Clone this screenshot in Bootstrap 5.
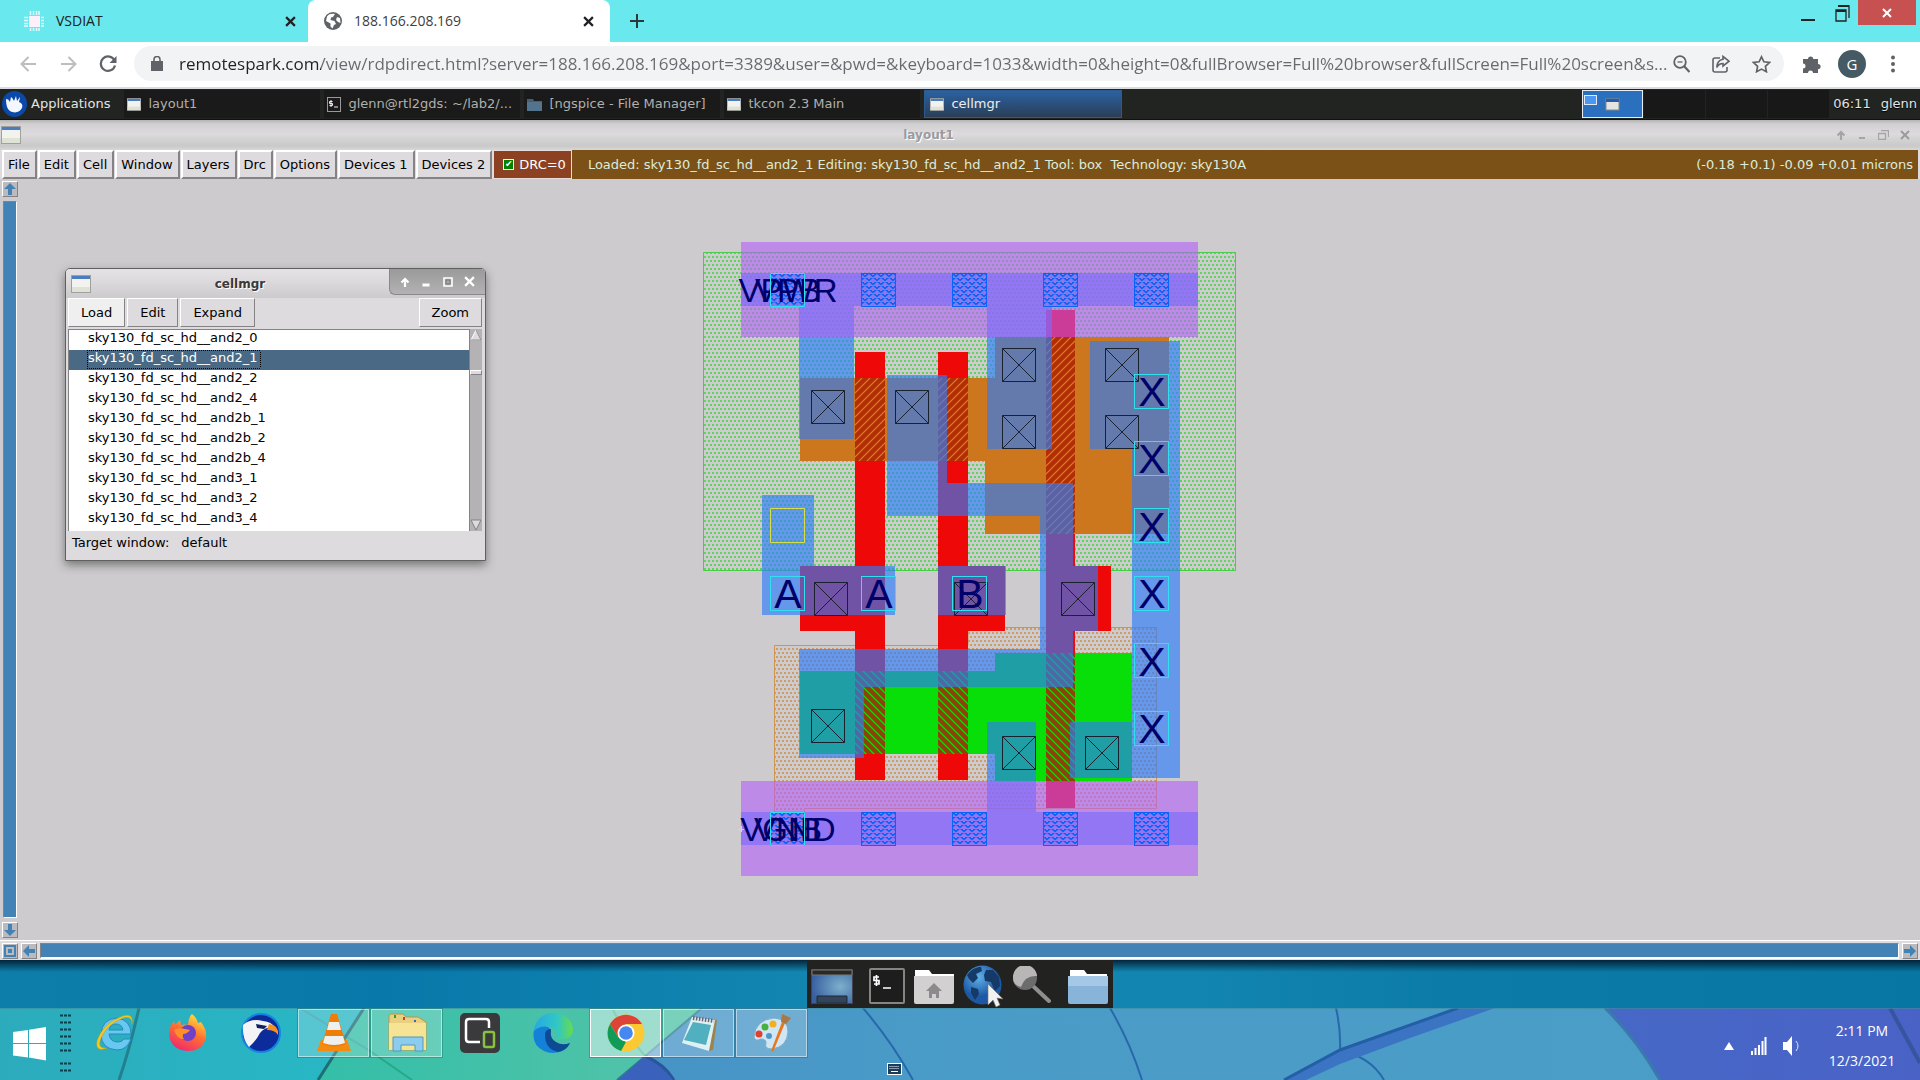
<!DOCTYPE html>
<html lang="en">
<head>
<meta charset="utf-8">
<title>188.166.208.169</title>
<meta name="viewport" content="width=device-width, initial-scale=1">
<link href="https://cdn.jsdelivr.net/npm/bootstrap@5.3.0/dist/css/bootstrap.min.css" rel="stylesheet">
<style>
body{font-family:"Open Sans","Noto Sans",sans-serif;font-size:14px;line-height:20px;overflow:hidden;color:#202124}
button,input,select{font:inherit;color:inherit}
svg{display:block;flex-shrink:0}
.bare{border:0;background:none;padding:0;display:flex;align-items:center;justify-content:center}
/* browser */
.tabstrip{height:42px;background:#69e8ed}
.tab-idle{width:308px;padding:0 12px 0 24px}
.tab-live{width:302px;padding:0 16px 0 16px;gap:12px;background:#fff;border-radius:8px 8px 0 0;color:#3c4043}
.tab-live .bare{color:#202124}
.win-ctl{height:25px;align-self:flex-start}
.win-close{width:58px;height:25px;background:#c75050}
.toolbar-row{height:47px;border-bottom:2px solid #dadce0;background:#fff;padding:0 24px 2px 18px}
.nav-ic{width:20px;margin-right:20px}
.omni{height:35px;border-radius:18px;background:#f1f3f4;padding:0 13px 0 17px;margin-right:18px;min-width:0}
.omni-tools{gap:22px}
.url-box{border:0;outline:0;min-width:0;font-size:17px;line-height:28px;padding:0;color:#5f6368;background:linear-gradient(90deg,#202124 0 142px,#666a6e 142px);-webkit-background-clip:text;background-clip:text;-webkit-text-fill-color:transparent}
.avatar-dot{width:28px;height:28px;border-radius:50%;background:#455a64;color:#fff;font-size:15px;margin-right:20px}
/* remote desktop */
.xpanel,.wm-title,.magic,.cellwin{font-family:"DejaVu Sans",sans-serif;font-size:13px;line-height:20px}
.xpanel{height:31px;background:#222421;color:#e4e4e4;border-bottom:1px solid #111;text-shadow:0 1px 1px #000}
.app-menu{padding-left:2px;margin-right:14px}
.task-b{width:196px;height:28px;margin-right:4px;padding:0 3px;gap:7px;background:#191a19;color:#b0b0ae;justify-content:flex-start;text-align:left}
.task-b.on{width:198px;padding:0 5px;background:linear-gradient(#2b62a0,#2a3e58);border:1px solid #2a5a90;color:#eee}
.pager-c{width:61px;height:28px;margin-left:1px;background:#171817}
.pager-c.on{background:#2a70be;border:1px solid #e8eef6}
.xpanel-end{gap:10px;padding:0 3px 0 4px}
.wm-title{height:30px;background:linear-gradient(#b4b4b4,#d2d0d2 4px,#dcdadc 14px,#c9c9c9 26px,#d8d8d8);color:#9c9a9c;font-size:12px;font-weight:700;text-shadow:1px 1px 0 #fff;padding:0 10px 0 1px}
.wm-ctl{gap:11px}
.magic{background:#cecbce;min-height:0}
.menu-b{height:29px;border:2px solid;border-color:#fff #848284 #848284 #fff;background:#dedbde;color:#000;padding:0 5px 0 4px;margin-right:1px;white-space:nowrap}
.menu-row{height:29px;padding:0 2px;background:#dedbde}
.drc-b{height:29px;background:#8c4222;color:#fff;border:1px solid #e6dcd8;padding:0 5px 0 9px;gap:5px;white-space:nowrap}
.drc-b input{appearance:none;width:11px;height:11px;margin:0;background:#008200;border:1px solid #dfd;display:grid;place-content:center}
.drc-b input:checked::before{content:"✔";font-size:9px;line-height:9px;color:#fff}
.status-b{background:#7b5118;color:#dcecdc;padding:0 5px 0 16px;white-space:pre}
.vbar{width:20px;padding:2px}
.sq-b{width:16px;height:16px;background:#bdbabd;border:solid 1px;border-color:#fff #848284 #848284 #fff}
.track-v{width:14px;background:#4282b5;border:solid 1px;border-color:#848284 #fff #fff #848284}
.track-h{height:16px;background:#4282b5;border:solid;border-width:1px 1px 2px 1px;border-color:#848284 #fff #fff #848284}
.hbar{height:20px;padding:1px 2px;border-top:1px solid #fff;background:#dedbde;gap:3px}
.layout-area{position:relative;min-height:0;overflow:hidden}
.layout-view{width:0}
.layout-area text{font-family:"Liberation Sans",Arial,sans-serif;fill:#00006b;text-anchor:middle}
/* cell manager */
.cellwin{position:absolute;left:65px;top:89px;width:421px;background:#dedbde;border:1px solid #606060;border-radius:5px 5px 0 0;box-shadow:0 4px 10px rgba(40,50,40,.55);color:#000;padding:0 3px 0 2px}
.cellwin-t{height:29px;margin:0 -3px 0 -2px;border-radius:4px 4px 0 0;background:linear-gradient(#e4e2e4,#dcdadc 12px,#cccacc);padding-left:5px}
.cellwin-t b{font-size:12px;color:#3a3a3a;text-shadow:1px 1px 0 #fff}
.cellwin-c{width:96px;height:26px;align-self:flex-start;background:linear-gradient(#9a9a9a,#b4b2b4);border:solid #888;border-width:0 0 1px 1px;border-radius:0 4px 0 6px;justify-content:space-around;padding:0 4px}
.cell-tools{gap:2px;padding-bottom:2px}
.cell-foot{gap:12px;padding:2px 4px 7px}
.cell-b{height:29px;border:1px solid;border-color:#fff #848284 #848284 #fff;background:#dedbde;padding:0 12px}
.cell-b.hot{background:#efefef}
.cell-list{appearance:none;border:solid #848284;border-width:1px 0 0 1px;border-radius:0;padding:0;height:202px;overflow:hidden;background:#fff;outline:0}
.cell-list option{height:20px;min-height:20px;line-height:20px;padding:0 0 0 19px;color:#000}
.cell-list option:checked{-webkit-text-fill-color:#fff;color:#fff;background:
 repeating-linear-gradient(90deg,#000 0 1px,#4a6984 1px 2px) 18px 0/174px 1px no-repeat,
 repeating-linear-gradient(90deg,#000 0 1px,#4a6984 1px 2px) 18px 18px/174px 1px no-repeat,
 repeating-linear-gradient(#000 0 1px,#4a6984 1px 2px) 18px 0/1px 19px no-repeat,
 repeating-linear-gradient(#000 0 1px,#4a6984 1px 2px) 191px 0/1px 19px no-repeat,#4a6984}
.cell-sb{width:13px;background:#b5b2b5;border-left:1px solid #848284}
.sb-thumb{height:5px;background:#dedbde;border:solid 1px;border-color:#fff #848284 #848284 #fff;margin-top:29px}
/* host */
.desk{height:48px;background:linear-gradient(rgba(0,20,40,.85),rgba(0,40,60,0) 12px),linear-gradient(90deg,#0d7ea8,#0878aa 20%,#1286b0 42%,#1285b0 62%,#0c7ba8 75%,#0776a2)}
.dock{width:306px;background:#222320;padding:4px 4px 0}
.dock .bare{margin-right:8px}
.dock .wide{margin-right:16px}
.dock .bare:last-child{margin-right:0}
.winbar{height:72px;position:relative}
.winbar-bg{position:absolute;left:0;top:0;width:100%;height:100%}
.winbar-row{position:relative;height:72px}
.start-b{padding-left:13px}
.grip-b{margin:0 6px 0 12px}
.wb{width:71px;height:48px;margin-right:2px;margin-top:1px}
.wb.run{background:rgba(255,255,255,.22);border:1px solid rgba(255,255,255,.5);outline:1px solid rgba(20,80,90,.3)}
.wb.front{background:rgba(255,255,255,.45);border-color:#fff}
.tray{color:#fff;padding:3px 20px 0 0}
.clock-b{line-height:30px;width:76px}
.kbd-b{position:absolute;left:887px;top:55px}
</style>
<script src="https://cdn.jsdelivr.net/npm/bootstrap@5.3.0/dist/js/bootstrap.bundle.min.js"></script>
</head>
<body class="vh-100 d-flex flex-column">
<svg width="0" height="0" class="position-absolute" aria-hidden="true"><defs>
 <symbol id="winic" viewBox="0 0 20 18"><rect width="20" height="18" fill="#a0a09c"/><rect x="1" y="1" width="18" height="16" fill="#f2f3ee"/><rect x="1" y="1" width="18" height="3" fill="#4c7cc0"/><rect x="1" y="12" width="18" height="5" fill="#dfe2d6"/></symbol>
 <symbol id="xx" viewBox="0 0 10 10"><path d="M1 1l8 8M9 1l-8 8" stroke="currentColor" stroke-width="2" fill="none"/></symbol>
</defs></svg>

<header class="tabstrip d-flex align-items-stretch">
 <div class="tab-idle d-flex align-items-center">
  <svg width="20" height="20" viewBox="0 0 20 20"><rect x="5" y="5" width="11" height="11" fill="#fdf0fb"/><path d="M6.500 0v4M9.500 0v4M12.500 0v4M15 0v4M6.500 17v3M9.500 17v3M12.500 17v3M15 17v3M0 6.500h4M0 9.500h4M0 12.500h4M0 15h4M17 6.500h3M17 9.500h3M17 12.500h3M17 15h3" stroke="#e4fbfd" stroke-width="1.500"/></svg>
  <span class="ms-2 ps-1 me-auto">VSDIAT</span>
  <button class="bare" aria-label="Close tab"><svg width="11" height="11"><use href="#xx"/></svg></button>
 </div>
 <div class="tab-live d-flex align-items-center">
  <svg width="18" height="18" viewBox="0 0 18 18"><circle cx="9" cy="9" r="9" fill="#5f6368"/><path d="M3 4.500c2-3 5-3 8-2.500l-2 3-2 .5-.5 2.500 4 1 1.500 3-2 1-1.500 3.500-2-2v-3L2 9zM13 5l3 1 .5 5-2.500-1-2-2z" fill="#fff"/></svg>
  <span class="me-auto">188.166.208.169</span>
  <button class="bare" aria-label="Close tab"><svg width="11" height="11"><use href="#xx"/></svg></button>
 </div>
 <button class="bare ms-3 me-auto px-1" aria-label="New tab"><svg width="14" height="14" viewBox="0 0 14 14"><path d="M7 0v14M0 7h14" stroke="#2a3a3c" stroke-width="2"/></svg></button>
 <div class="d-flex win-ctl me-1">
  <button class="bare px-3" aria-label="Minimize"><svg width="14" height="20"><path d="M0 16h14v2H0z" fill="#222"/></svg></button>
  <button class="bare ps-1 pe-2" aria-label="Restore"><svg width="15" height="20" viewBox="0 0 15 20"><path d="M3 3h11v12M1 7h10v11H1z" stroke="#222" stroke-width="1.300" fill="none"/><path d="M3 3h11M1 8h10" stroke="#222" stroke-width="2"/></svg></button>
  <button class="bare win-close text-white" aria-label="Close"><svg width="10" height="10"><use href="#xx"/></svg></button>
 </div>
</header>

<div class="toolbar-row d-flex align-items-center">
 <button class="bare nav-ic" aria-label="Back"><svg width="17" height="16" viewBox="0 0 17 16"><path d="M16 8H2M8.500 1L1.500 8l7 7" stroke="#bcbec0" stroke-width="2" fill="none"/></svg></button>
 <button class="bare nav-ic" aria-label="Forward"><svg width="17" height="16" viewBox="0 0 17 16"><path d="M1 8h14M8.500 1l7 7-7 7" stroke="#bcbec0" stroke-width="2" fill="none"/></svg></button>
 <button class="bare nav-ic me-3" aria-label="Reload"><svg width="18" height="18" viewBox="0 0 18 18"><path d="M15.500 5.500A7.200 7.200 0 1 0 16 10.500" stroke="#5f6368" stroke-width="2.200" fill="none"/><path d="M17.500 1v7h-7z" fill="#5f6368"/></svg></button>
 <div class="omni d-flex align-items-center flex-fill">
  <svg width="12" height="15" viewBox="0 0 12 15"><path d="M0 5h12v10H0z" fill="#5f6368"/><path d="M3 6V3.500a3 3 0 0 1 6 0V6" stroke="#5f6368" stroke-width="1.600" fill="none"/></svg>
  <input class="url-box flex-fill ms-3" type="text" aria-label="Address" value="remotespark.com/view/rdpdirect.html?server=188.166.208.169&amp;port=3389&amp;user=&amp;pwd=&amp;keyboard=1033&amp;width=0&amp;height=0&amp;fullBrowser=Full%20browser&amp;fullScreen=Full%20screen&amp;s...">
  <div class="d-flex omni-tools">
   <button class="bare" aria-label="Zoom"><svg width="17" height="18" viewBox="0 0 17 18"><circle cx="7" cy="7" r="5.800" stroke="#5f6368" stroke-width="1.800" fill="none"/><path d="M11 11l5.500 6" stroke="#5f6368" stroke-width="2.200"/><path d="M4.500 7h5" stroke="#5f6368" stroke-width="1.300"/></svg></button>
   <button class="bare" aria-label="Share"><svg width="18" height="18" viewBox="0 0 18 18"><path d="M8 3H3a2 2 0 0 0-2 2v10a2 2 0 0 0 2 2h10a2 2 0 0 0 2-2v-3M11 1.500l6 4.700-6 4.800V8.500C8 8.500 6 10 4.800 12.500 5 8 7.500 4.800 11 4.300z" stroke="#5f6368" stroke-width="1.600" fill="none"/></svg></button>
   <button class="bare" aria-label="Bookmark"><svg width="19" height="18" viewBox="0 0 19 18"><path d="M9.500 1.800l2.400 5 5.500.7-4 3.800 1 5.400-4.900-2.600-4.900 2.600 1-5.400-4-3.800 5.500-.7z" stroke="#5f6368" stroke-width="1.700" fill="none"/></svg></button>
  </div>
 </div>
 <button class="bare me-3" aria-label="Extensions"><svg width="20" height="20" viewBox="0 0 20 20"><path d="M1 5h5a2.600 2.600 0 1 1 5.200 0H16v5a2.600 2.600 0 1 1 0 5.200V19h-5a2.500 2.500 0 0 0-5 0H1v-4.500a2.500 2.500 0 0 0 0-5z" fill="#5f6368"/></svg></button>
 <button class="bare avatar-dot" aria-label="Profile">G</button>
 <button class="bare ps-1" aria-label="Menu"><svg width="6" height="18" viewBox="0 0 6 18"><g fill="#5f6368"><circle cx="3" cy="2.500" r="2"/><circle cx="3" cy="9" r="2"/><circle cx="3" cy="15.500" r="2"/></g></svg></button>
</div>

<nav class="xpanel d-flex align-items-center">
 <button class="bare app-menu"><svg width="25" height="26" viewBox="0 0 25 26" class="me-1"><ellipse cx="12.500" cy="13" rx="12.500" ry="13" fill="#0b49a8"/><path d="M4 8c2 0 3 1 4 3l1-5c2 1 2 3 3 4l2-5 1 5 3-4c0 2-1 4-1 5 3 1 4 3 3 6-2 4-7 6-12 3-3-2-4-7-4-12z" fill="#f4f8fc"/></svg>Applications</button>
 <button class="bare task-b"><svg width="14" height="13"><use href="#winic"/></svg>layout1</button>
 <button class="bare task-b"><svg width="14" height="15" viewBox="0 0 14 15"><rect x=".5" y=".5" width="13" height="14" fill="#1a1a1a" stroke="#999"/><path d="M5.500 4.500h-3v2h3v2h-3M4 3v7M7 10h4" stroke="#eee" fill="none"/></svg>glenn@rtl2gds: ~/lab2/...</button>
 <button class="bare task-b"><svg width="15" height="13" viewBox="0 0 15 13"><path d="M0 1h6l1 2h8v10H0z" fill="#42607a"/><path d="M0 4h15v9H0z" fill="#54748e"/></svg>[ngspice - File Manager]</button>
 <button class="bare task-b"><svg width="14" height="13"><use href="#winic"/></svg>tkcon 2.3 Main</button>
 <button class="bare task-b on me-auto"><svg width="14" height="13"><use href="#winic"/></svg>cellmgr</button>
 <div class="d-flex">
  <button class="bare pager-c on" aria-label="Workspace 1"><svg width="59" height="26" viewBox="0 0 59 26"><rect x="1.500" y="4.500" width="12" height="9" fill="#4a98f0" stroke="#dfeaf8"/><rect x="23" y="8" width="13" height="11" fill="#e4e4e0" stroke="#888"/><path d="M23 9.500h13" stroke="#2a5aa8" stroke-width="3"/></svg></button>
  <button class="bare pager-c" aria-label="Workspace 2"></button><button class="bare pager-c" aria-label="Workspace 3"></button><button class="bare pager-c" aria-label="Workspace 4"></button>
 </div>
 <div class="d-flex xpanel-end"><span>06:11</span><span>glenn</span></div>
</nav>

<div class="wm-title d-flex align-items-center">
 <svg width="20" height="18"><use href="#winic"/></svg>
 <span class="flex-fill text-center">layout1</span>
 <div class="d-flex align-items-center wm-ctl">
  <svg width="10" height="10" viewBox="0 0 10 10"><path d="M5 10V3M1.500 5.500L5 2l3.500 3.500" stroke="#a6a4a6" stroke-width="2.200" fill="none"/></svg>
  <svg width="10" height="10" viewBox="0 0 10 10"><path d="M2 8h6" stroke="#a6a4a6" stroke-width="2"/></svg>
  <svg width="11" height="10" viewBox="0 0 11 10"><path d="M3 .5h7.500V7M.5 3.500h7v6h-7z" stroke="#a6a4a6" stroke-width="1.300" fill="none"/></svg>
  <svg width="10" height="10"><use href="#xx"/></svg>
 </div>
</div>

<main class="magic d-flex flex-column flex-fill">
 <div class="menu-row d-flex">
  <button class="menu-b">File</button><button class="menu-b">Edit</button><button class="menu-b">Cell</button><button class="menu-b">Window</button><button class="menu-b">Layers</button><button class="menu-b">Drc</button><button class="menu-b">Options</button><button class="menu-b">Devices 1</button><button class="menu-b">Devices 2</button>
  <label class="drc-b d-flex align-items-center"><input type="checkbox" checked>DRC=0</label>
  <div class="status-b flex-fill d-flex align-items-center justify-content-between"><span>Loaded: sky130_fd_sc_hd__and2_1 Editing: sky130_fd_sc_hd__and2_1 Tool: box  Technology: sky130A</span><span>(-0.18 +0.1) -0.09 +0.01 microns</span></div>
 </div>
 <div class="layout-area flex-fill d-flex">
  <div class="vbar d-flex flex-column align-items-center gap-1">
   <button class="bare sq-b" aria-label="Pan up"><svg width="14" height="14" viewBox="0 0 14 14"><path d="M7 1l6 6H9v6H5V7H1z" fill="#4282b5"/></svg></button>
   <div class="track-v flex-fill"></div>
   <button class="bare sq-b" aria-label="Pan down"><svg width="14" height="14" viewBox="0 0 14 14"><path d="M7 13l6-6H9V1H5v6H1z" fill="#4282b5"/></svg></button>
  </div>
  <svg class="flex-fill layout-view" height="100%" role="img" aria-label="Cell layout">
   <defs>
    <pattern id="pg" width="4" height="8" patternUnits="userSpaceOnUse"><path d="M0 0h2v2H0zM2 4h2v2H2z" fill="#5ad65a"/></pattern>
    <pattern id="po" width="4" height="8" patternUnits="userSpaceOnUse"><path d="M0 0h2v2H0zM2 4h2v2H2z" fill="#d09c66"/></pattern>
    <pattern id="hp" width="8" height="8" patternUnits="userSpaceOnUse"><rect width="8" height="8" fill="#b52c08"/><path d="M-1 9L9-1M-5 5L5-5M3 13L13 3" stroke="#d08a18" stroke-width="1.200"/></pattern>
    <pattern id="hn" width="8" height="8" patternUnits="userSpaceOnUse"><rect width="8" height="8" fill="#8c4208"/><path d="M-1-1L9 9M-5 3L5 13M3-5L13 5" stroke="#08df08" stroke-width="1.300"/></pattern>
    <pattern id="tri" width="8" height="8" patternUnits="userSpaceOnUse"><path d="M0 1h8L4 4.500zM-4 5h8L0 8.500zM4 5h8L8 8.500z" fill="#0a63f7"/><path d="M3 1.500h2M-1 5.500h2M7 5.500h2" stroke="#9478ee"/></pattern>
    <symbol id="ct" viewBox="0 0 35 34"><path d="M.5.500h33v33H.5zM.5.500l33 33M33.500.5l-33 33" fill="none" stroke="#1a2230" stroke-width="1"/></symbol>
    <symbol id="via" viewBox="0 0 35 34"><rect x=".5" y=".5" width="34" height="33" fill="url(#tri)" stroke="#0a63f7"/></symbol>
    <symbol id="lb" viewBox="0 0 35 35"><rect x=".5" y=".5" width="34" height="34" fill="none" stroke="#30e0ee"/></symbol>
   </defs>
   <g transform="translate(-20 -179)">
    <path d="M703.500 252.500h532v318h-532z" fill="url(#pg)" stroke="#4ccc4c"/>
    <path d="M774.500 645.500H968V627.500H1156.500V808.500H804.500V812H774.500Z" fill="url(#po)" stroke="#cf9450"/>
    <path d="M800 378H995V337H1169V534H985V461H800Z" fill="#cc761d"/>
    <path d="M800 671H995V653H1132V781H995V754H800Z" fill="#08df08"/>
    <path d="M855 352H885V780H855V631H800V566H855ZM938 352H968V566H1005V631H968V780H938ZM1046 310H1075V566H1111V631H1075V808H1046Z" fill="#ef0808"/>
    <path d="M855 378h30v83h-30zM938 378h30v83h-30zM1046 337h29v197h-29z" fill="url(#hp)"/>
    <path d="M855 671h30v83h-30zM938 671h30v83h-30zM1046 653h29v128h-29z" fill="url(#hn)"/>
    <path d="M741 273H1198V306H1052V449H987V306H854V439H799V306H741ZM887 375H947V483H1073V566H1098V631H1073V687H864V758H799V649H1040V516H887ZM762 495H814V566H895V615H762ZM938 566H1006V615H938ZM1090 341H1180V778H1132V449H1090ZM741 812H987V722H1036V812H1198V845H741ZM1070 722H1132V778H1070Z" fill="#2d7dfa" fill-opacity=".65"/>
    <path d="M741 242H1198V337H741ZM741 781H1198V876H741Z" fill="#b25ff8" fill-opacity=".6"/>
    <g><use href="#ct" x="811" y="390" width="35" height="34"/><use href="#ct" x="895" y="390" width="35" height="34"/><use href="#ct" x="1002" y="348" width="35" height="34"/><use href="#ct" x="1105" y="348" width="35" height="34"/><use href="#ct" x="1002" y="415" width="35" height="34"/><use href="#ct" x="1105" y="415" width="35" height="34"/><use href="#ct" x="814" y="582" width="35" height="34"/><use href="#ct" x="954" y="582" width="35" height="34"/><use href="#ct" x="1061" y="582" width="35" height="34"/><use href="#ct" x="811" y="709" width="35" height="34"/><use href="#ct" x="1002" y="736" width="35" height="34"/><use href="#ct" x="1085" y="736" width="35" height="34"/></g>
    <g><use href="#via" x="770" y="273" width="35" height="34"/><use href="#via" x="861" y="273" width="35" height="34"/><use href="#via" x="952" y="273" width="35" height="34"/><use href="#via" x="1043" y="273" width="35" height="34"/><use href="#via" x="1134" y="273" width="35" height="34"/><use href="#via" x="770" y="812" width="35" height="34"/><use href="#via" x="861" y="812" width="35" height="34"/><use href="#via" x="952" y="812" width="35" height="34"/><use href="#via" x="1043" y="812" width="35" height="34"/><use href="#via" x="1134" y="812" width="35" height="34"/></g>
    <path d="M770.500 508.500h34v34h-34z" fill="none" stroke="#d8e040"/>
    <g font-size="33"><text x="788" y="302">VPWR</text><text x="788" y="302">VPB</text><text x="788" y="841">VGND</text><text x="788" y="841">VNB</text></g>
    <g font-size="41"><text x="788" y="608">A</text><text x="879" y="608">A</text><text x="970" y="608">B</text><text x="1152" y="406">X</text><text x="1152" y="473">X</text><text x="1152" y="541">X</text><text x="1152" y="608">X</text><text x="1152" y="676">X</text><text x="1152" y="743">X</text></g>
    <path d="M770.500 273.500h34v33h-34zM770.500 812.500h34v33h-34z" fill="none" stroke="#30e0ee"/>
    <g><use href="#lb" x="770" y="576" width="35" height="35"/><use href="#lb" x="861" y="576" width="35" height="35"/><use href="#lb" x="952" y="576" width="35" height="35"/><use href="#lb" x="1134" y="374" width="35" height="35"/><use href="#lb" x="1134" y="441" width="35" height="35"/><use href="#lb" x="1134" y="508" width="35" height="35"/><use href="#lb" x="1134" y="576" width="35" height="35"/><use href="#lb" x="1134" y="643" width="35" height="35"/><use href="#lb" x="1134" y="711" width="35" height="35"/></g>
    <path d="M738 829.500h6M741.500 826v6" stroke="#f0e820"/>
   </g>
  </svg>

  <section class="cellwin">
   <div class="cellwin-t d-flex align-items-center">
    <svg width="20" height="18"><use href="#winic"/></svg>
    <b class="flex-fill text-center">cellmgr</b>
    <div class="cellwin-c d-flex align-items-center">
     <button class="bare" aria-label="Shade"><svg width="10" height="10" viewBox="0 0 10 10"><path d="M5 10V3M1.500 5.500L5 2l3.500 3.500" stroke="#fff" stroke-width="2.200" fill="none"/></svg></button>
     <button class="bare" aria-label="Minimize"><svg width="10" height="10" viewBox="0 0 10 10"><path d="M1.500 8h7" stroke="#fff" stroke-width="3"/></svg></button>
     <button class="bare" aria-label="Maximize"><svg width="10" height="10" viewBox="0 0 10 10"><path d="M1 1h8v8H1z" stroke="#fff" stroke-width="1.600" fill="none"/><path d="M3 3h4v4H3z" stroke="#777" fill="none"/></svg></button>
     <button class="bare text-white" aria-label="Close"><svg width="11" height="11"><use href="#xx"/></svg></button>
    </div>
   </div>
   <div class="d-flex cell-tools">
    <button class="cell-b hot">Load</button><button class="cell-b">Edit</button><button class="cell-b me-auto">Expand</button><button class="cell-b">Zoom</button>
   </div>
   <div class="d-flex">
    <select class="cell-list flex-fill" size="10" aria-label="Cells">
     <option>sky130_fd_sc_hd__and2_0</option><option selected>sky130_fd_sc_hd__and2_1</option><option>sky130_fd_sc_hd__and2_2</option><option>sky130_fd_sc_hd__and2_4</option><option>sky130_fd_sc_hd__and2b_1</option><option>sky130_fd_sc_hd__and2b_2</option><option>sky130_fd_sc_hd__and2b_4</option><option>sky130_fd_sc_hd__and3_1</option><option>sky130_fd_sc_hd__and3_2</option><option>sky130_fd_sc_hd__and3_4</option>
    </select>
    <div class="cell-sb d-flex flex-column">
     <svg width="12" height="12" viewBox="0 0 12 12"><path d="M6 1l5 10H1z" fill="#dedbde" stroke="#fff"/><path d="M6 1l5 10H1" fill="none" stroke="#848284"/></svg>
     <div class="sb-thumb"></div>
     <svg class="mt-auto" width="12" height="12" viewBox="0 0 12 12"><path d="M6 11L1 1h10z" fill="#dedbde" stroke="#848284"/></svg>
    </div>
   </div>
   <div class="d-flex cell-foot"><span>Target window:</span><span>default</span></div>
  </section>
 </div>
 <div class="hbar d-flex align-items-center">
  <button class="bare sq-b" aria-label="Fit"><svg width="14" height="14" viewBox="0 0 14 14"><path d="M2 2h10v10H2z" fill="none" stroke="#4282b5" stroke-width="2"/><path d="M5 5h4v4H5z" fill="#4282b5"/></svg></button>
  <button class="bare sq-b" aria-label="Pan left"><svg width="14" height="14" viewBox="0 0 14 14"><path d="M1 7l6-6v4h6v4H7v4z" fill="#4282b5"/></svg></button>
  <div class="track-h flex-fill"></div>
  <button class="bare sq-b" aria-label="Pan right"><svg width="14" height="14" viewBox="0 0 14 14"><path d="M13 7L7 1v4H1v4h6v4z" fill="#4282b5"/></svg></button>
 </div>
</main>

<div class="desk d-flex justify-content-center">
 <div class="dock d-flex align-items-center">
  <button class="bare wide" aria-label="Show desktop"><svg width="42" height="36" viewBox="0 0 42 36"><defs><radialGradient id="dg" cx=".7" cy=".5" r=".7"><stop stop-color="#7cb0cc"/><stop offset="1" stop-color="#3860a0"/></radialGradient></defs><rect x=".5" y="1.500" width="41" height="34" fill="url(#dg)" stroke="#445"/><path d="M1 2h40v5H1z" fill="#282a28" stroke="#777"/><path d="M6 28h30v7H6z" fill="#34445a" stroke="#1e2a3a"/></svg></button>
  <button class="bare" aria-label="Terminal"><svg width="36" height="36" viewBox="0 0 36 36"><rect x="1" y="1" width="34" height="34" rx="1" fill="#1c1d1c" stroke="#848684" stroke-width="2"/><path d="M10 9H5v3.500h5V16H5M7.500 7v11M14 20h8" stroke="#fff" stroke-width="1.700" fill="none"/></svg></button>
  <button class="bare" aria-label="Home"><svg width="42" height="36" viewBox="0 0 42 36"><path d="M2 2h14l3 4h22v8H2z" fill="#fff"/><path d="M1 8h40v26q0 2-2 2H3q-2 0-2-2z" fill="#d2d0d0"/><path d="M21 15l8 8h-3v7h-3v-4h-4v4h-3v-7h-3z" fill="#8c8a8a"/></svg></button>
  <button class="bare" aria-label="Web browser"><svg width="42" height="42" viewBox="0 0 42 42"><defs><radialGradient id="gl" cx=".4" cy=".3"><stop stop-color="#60b0e8"/><stop offset="1" stop-color="#1c58a4"/></radialGradient></defs><ellipse cx="19.500" cy="20" rx="19" ry="19.500" fill="url(#gl)"/><path d="M4 10c5-6 9-8 14-8l1 4-6 3 2 4-5 5-4-4zM8 22l7 2 1 5-4 6-4-7zM23 5l7 0 6 7 1 9-5 5-4-9-6-1-1-6z" fill="#163a68"/><path d="M25 19l15 15-6-1 3 7-4 2-3-7-5 5z" fill="#f2f2f2" stroke="#777" stroke-width=".6"/></svg></button>
  <button class="bare wide" aria-label="Search"><svg width="38" height="40" viewBox="0 0 38 40"><path d="M20 20l16 15" stroke="#908e8e" stroke-width="4" stroke-linecap="round"/><circle cx="12" cy="12" r="12" fill="#6c6c6c"/><path d="M0 12a12 12 0 0 1 24-2Q12 9 8 21Q0 19 0 12z" fill="#b8b6b6"/></svg></button>
  <button class="bare" aria-label="Files"><svg width="42" height="36" viewBox="0 0 42 36"><path d="M3 2h14l3 4h20v8H3z" fill="#fff"/><path d="M1 8h40v26q0 2-2 2H3q-2 0-2-2z" fill="#88b4da"/><path d="M1 8h40v10H1z" fill="#a4c8e6"/></svg></button>
 </div>
</div>

<footer class="winbar">
 <svg class="winbar-bg" viewBox="0 0 1920 72" preserveAspectRatio="none">
  <defs><linearGradient id="b1"><stop stop-color="#2cabbc"/><stop offset="1" stop-color="#28b8c6"/></linearGradient><linearGradient id="b2"><stop stop-color="#34bea8"/><stop offset="1" stop-color="#55c4a8"/></linearGradient><linearGradient id="b3"><stop stop-color="#3f80c4"/><stop offset=".5" stop-color="#4a9cc8"/><stop offset="1" stop-color="#4a9ec6"/></linearGradient><linearGradient id="b4"><stop stop-color="#4668c6"/><stop offset="1" stop-color="#4a62c6"/></linearGradient></defs>
  <rect width="1920" height="72" fill="url(#b3)"/>
  <path d="M0 0H365L318 72H0z" fill="url(#b1)"/><path d="M364 0H702L618 72H317z" fill="url(#b2)"/>
  <path d="M300 0L370 43" stroke="#3a8e9a" stroke-opacity=".5" stroke-width="2"/><path d="M370 43L412 72M612 0Q622 20 645 48" stroke="#28a888" stroke-width="2" fill="none"/>
  <path d="M139 0Q130 40 119 72" stroke="#23808e" stroke-width="3" fill="none"/><path d="M364 0L318 72" stroke="#1e6e74" stroke-width="3"/><path d="M702 0L617 72" stroke="#297f90" stroke-width="2"/>
  <path d="M618 72L645 48Q662 56 672 72z" fill="#3a62bc"/><path d="M645 48Q664 56 674 72" stroke="#2a569a" stroke-width="3" fill="none"/>
  <path d="M863 0Q892 34 913 72M1110 0Q1130 34 1142 72M1336 0Q1341 22 1340 43Q1370 48 1384 72" stroke="#2868ac" stroke-width="2" fill="none"/>
  <path d="M1285 72L1340 43L1458 0H1495L1410 30L1340 56L1306 72z" fill="#3c74c4"/><path d="M1284 72L1340 42L1458 0" stroke="#245ea6" stroke-width="3" fill="none"/>
  <path d="M1605 0Q1636 30 1660 72H1920V0z" fill="url(#b4)"/><path d="M1605 0Q1636 30 1660 72" stroke="#3a78b0" stroke-width="3" fill="none"/><path d="M1890 0L1920 55" stroke="#35559e" stroke-width="4"/>
  <path d="M0 .5H1920" stroke="#3c8c9c" stroke-opacity=".6"/>
 </svg>
 <div class="winbar-row d-flex">
  <button class="bare start-b" aria-label="Start"><svg width="34" height="34" viewBox="0 0 34 34"><path d="M0 5l15-2v13H0zM16 2.800L33 0v16H16zM0 17h15v13.500L0 28.500zM16 17h17v16.500l-17-3z" fill="#fff"/></svg></button>
  <svg class="grip-b" width="14" height="72" viewBox="0 0 14 72"><path d="M1 7.500h12M1 14.500h12M1 21.500h12M1 28.500h12M1 35.500h12M1 42.500h12M1 55.500h12M1 62.500h12" stroke="#0c3c48" stroke-width="2" stroke-dasharray="3 1"/></svg>
  <button class="bare wb" aria-label="Internet Explorer"><svg width="40" height="40" viewBox="0 0 40 40"><path d="M36 21H14q1 8 9 8 4 0 6-3h7q-4 11-14 11Q6 36 6 21 7 6 22 5q14 2 14 16zM14 17h14q-1-6-7-6t-7 6z" fill="#68c8f0" stroke="#2888c0"/><path d="M37 11Q39 0 28 3 8 10 2 28q-2 12 10 7-9 1-7-7Q10 12 28 5q9-3 9 6z" fill="#f4cc20" stroke="#c89a10" stroke-width=".5"/></svg></button>
  <button class="bare wb" aria-label="Firefox"><svg width="40" height="40" viewBox="0 0 40 40"><defs><linearGradient id="ff" x1=".8" y1="0" x2=".3" y2="1"><stop stop-color="#ffe840"/><stop offset=".5" stop-color="#ff7030"/><stop offset="1" stop-color="#f02870"/></linearGradient></defs><path d="M24 1q5 4 6 9l3-1q6 8 5 15-3 14-18 14Q3 37 1 22q0-9 5-14l1 4 5-5 1 5q4-1 7 0Q20 5 24 1z" fill="url(#ff)"/><circle cx="20" cy="20" r="8" fill="#7040c8"/><path d="M6 17q6-3 11-1l5 1q-3 4-7 4-1 3 1 5-6 0-8-5z" fill="#ff9028"/></svg></button>
  <button class="bare wb" aria-label="Eagle"><svg width="40" height="40" viewBox="0 0 40 40"><circle cx="20" cy="20" r="19" fill="#0c2c9c" stroke="#1484e4" stroke-width="2"/><path d="M2 12Q10 5 22 8q9 1 11 6-10 0-14 6-4 8-11 14Q1 26 2 12z" fill="#f4f4f6"/><path d="M28 11q10 1 9 11-3-5-11-5z" fill="#f49020"/><path d="M15 11l11 2-3 3-7-1z" fill="#102060"/></svg></button>
  <button class="bare wb run" aria-label="VLC"><svg width="36" height="40" viewBox="0 0 36 40"><path d="M5 27h26l4 11H1z" fill="#f48a10"/><path d="M15 1h6l9 30q-12 5-24 0z" fill="#f07c08"/><path d="M13 9h10l2 8H11zM9 23h18l2 7q-11 4-22 0z" fill="#eef0f0"/></svg></button>
  <button class="bare wb run" aria-label="File Explorer"><svg width="40" height="40" viewBox="0 0 40 40"><path d="M2 3q0-2 2-2h12l3 3h12l8 5v28H2z" fill="#e8d080" stroke="#b89840"/><path d="M2 10h37v27H2z" fill="#f6e494"/><path d="M7 2h2v3H7z" fill="#2a2"/><path d="M16 4h2v3h-2z" fill="#d33"/><path d="M27 7h2v2h-2z" fill="#36c"/><path d="M6 24h30v14h-8v-6H14v6H6z" fill="#8cccec" stroke="#5098c4"/></svg></button>
  <button class="bare wb" aria-label="Remote desktop"><svg width="40" height="40" viewBox="0 0 40 40"><rect width="40" height="40" rx="5" fill="#3a3a3c"/><path d="M20 29H9q-3 0-3-3V9q0-3 3-3h17q3 0 3 3v6" stroke="#fff" stroke-width="2.500" fill="none"/><rect x="24" y="19" width="10" height="15" rx="1.500" stroke="#88c040" stroke-width="2.500" fill="none"/></svg></button>
  <button class="bare wb" aria-label="Edge"><svg width="40" height="40" viewBox="0 0 40 40"><defs><linearGradient id="ed"><stop stop-color="#28a8e4"/><stop offset=".6" stop-color="#30c8c4"/><stop offset="1" stop-color="#68dc48"/></linearGradient></defs><path d="M1 17Q-2 32 11 38q8 4 18 0 6-3 8-8-5 3-10 2-10-3-9-12 1-5-6-7Q3 10 1 17z" fill="#1580d8"/><path d="M1 16Q5 0 21 0q18 2 19 17-1 9-10 9-8 0-6-5 0-6-8-7Q7 12 1 18z" fill="url(#ed)"/><path d="M12 22q0-6 6-6-2 9 5 13 6 4 14 1-4 8-12 9-13-3-13-17z" fill="#0c4a94"/></svg></button>
  <button class="bare wb run front" aria-label="Chrome"><svg width="38" height="38" viewBox="0 0 38 38"><circle cx="19" cy="19" r="18.500" fill="#fcc934"/><path d="M3 10A18.500 18.500 0 0 1 35 10H19L11 23z" fill="#dc4438"/><path d="M3 10l8 13 8 5-5 9A18.500 18.500 0 0 1 3 10z" fill="#109c58"/><circle cx="19" cy="19" r="8.500" fill="#fff"/><circle cx="19" cy="19" r="6.800" fill="#4688f0"/></svg></button>
  <button class="bare wb run" aria-label="Notepad"><svg width="38" height="38" viewBox="0 0 38 38"><path d="M14 4l23 2-4 30-4 1z" fill="#9a8450"/><path d="M12 3l23 3-6 31L2 29z" fill="#dff0f2"/><path d="M13 8l18 3-5 20L4 26z" fill="#50b0c0"/><path d="M13 4l21 3" stroke="#667" stroke-width="4" stroke-dasharray="1.500 1.500"/></svg></button>
  <button class="bare wb run" aria-label="Paint"><svg width="40" height="40" viewBox="0 0 40 40"><path d="M2 24Q3 7 22 5q14 1 14 14-1 15-16 17-8 0-6-6 0-4-5-4-6 3-7-2z" fill="#cfe6f4" stroke="#7cacc8"/><circle cx="7" cy="21" r="3.500" fill="#e04030"/><circle cx="13" cy="14" r="3.500" fill="#48b040"/><circle cx="21" cy="11" r="3.500" fill="#f0b020"/><circle cx="17" cy="23" r="3" fill="#5098c8"/><path d="M19 38l11-29 3 1-12 29z" fill="#e87820"/><path d="M29 9l1-8 9 4-5 6z" fill="#a87848"/></svg></button>
  <div class="tray ms-auto d-flex align-items-center">
   <svg class="me-3" width="10" height="8"><path d="M5 0l5 8H0z" fill="#fff"/></svg>
   <svg class="me-3" width="17" height="18" viewBox="0 0 17 18"><path d="M1 14h2v4H1zM4.500 11h2v7h-2zM8 8h2v10H8zM11.500 4h2v14h-2zM14.500 0h2v18h-2z" fill="#fff"/></svg>
   <svg class="me-4" width="17" height="20" viewBox="0 0 17 20"><path d="M0 6h4l5-6v20l-5-6H0z" fill="#fff"/><path d="M13 5q4 5 0 10" stroke="#dce4f8" fill="none"/></svg>
   <button class="bare clock-b flex-column"><span>2:11 PM</span><span>12/3/2021</span></button>
  </div>
 </div>
 <svg class="kbd-b" width="15" height="12" viewBox="0 0 15 12"><rect x=".5" y=".5" width="14" height="11" fill="#1c3c5c" stroke="#fff"/><path d="M2.500 3.500h10M2.500 5.500h10" stroke="#fff" stroke-dasharray="1 1"/><path d="M4 8.500h7" stroke="#fff"/></svg>
</footer>
</body>
</html>
